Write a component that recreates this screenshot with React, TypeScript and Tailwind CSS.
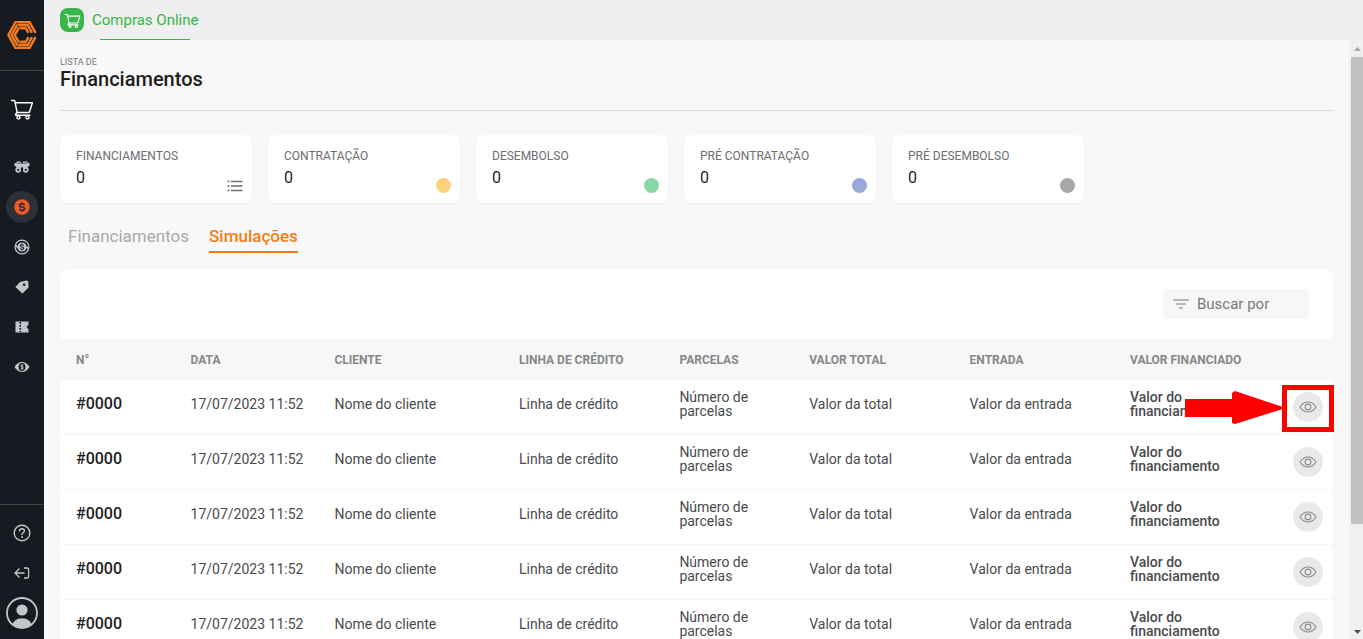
import type { ReactNode } from 'react';
import clsx from 'clsx';

const cards = [
  { label: 'FINANCIAMENTOS', value: 0, dot: null },
  { label: 'CONTRATAÇÃO', value: 0, dot: 'bg-[#fdd27c]' },
  { label: 'DESEMBOLSO', value: 0, dot: 'bg-[#88d8a6]' },
  { label: 'PRÉ CONTRATAÇÃO', value: 0, dot: 'bg-[#98a8d8]' },
  { label: 'PRÉ DESEMBOLSO', value: 0, dot: 'bg-[#a8a8a8]' },
];

const columns = [
  { title: 'N°', width: 'w-[9%]' },
  { title: 'DATA', width: 'w-[11.3%]' },
  { title: 'CLIENTE', width: 'w-[14.5%]' },
  { title: 'LINHA DE CRÉDITO', width: 'w-[12.6%]' },
  { title: 'PARCELAS', width: 'w-[10.2%]' },
  { title: 'VALOR TOTAL', width: 'w-[12.6%]' },
  { title: 'ENTRADA', width: 'w-[12.6%]' },
  { title: 'VALOR FINANCIADO', width: 'w-[12.8%]' },
];

const rows = [1, 2, 3, 4, 5].map((id) => ({
  id,
  number: '#0000',
  date: '17/07/2023 11:52',
  client: 'Nome do cliente',
  credit: 'Linha de crédito',
  installments: 'Número de parcelas',
  total: 'Valor da total',
  entry: 'Valor da entrada',
  financed: 'Valor do financiamento',
}));

function Logo() {
  return (
    <svg width="30" height="28" viewBox="0 0 30 28" fill="none" stroke="#f47a1f" strokeWidth="2.4">
      <path d="M28.6 11.8 L22.6 1.2 H8.4 L1.4 14 L8.4 26.8 H22.6 L28.6 16.2" />
      <path d="M25 11.8 L20.8 4.2 H10 L4.6 14 L10 23.8 H20.8 L25 16.2" />
      <path d="M21.4 11.8 L18.8 7.2 H11.6 L7.8 14 L11.6 20.8 H18.8 L21.4 16.2" />
      <path d="M9 1.5 L14 9.5 M9 26.5 L14 18.5" stroke="#171a21" strokeWidth="0.6" />
    </svg>
  );
}

function CartIcon({ size, stroke }: { size: number; stroke: number }) {
  return (
    <svg width={size} height={size} viewBox="0 0 24 24" fill="none" stroke="currentColor" strokeWidth={stroke} strokeLinejoin="round" strokeLinecap="round">
      <path d="M1.5 3.5 H4.6 L7.2 15.5 H19.3 L22.4 5.8 H5.1" />
      <path d="M7.2 15.5 L5.6 17.2 Q5.2 18.2 6.4 18.2 H19.8" />
      <circle cx="8.5" cy="20.4" r="1.5" />
      <circle cx="17.5" cy="20.4" r="1.5" />
    </svg>
  );
}

function TruckIcon() {
  return (
    <svg width="16" height="12" viewBox="0 0 16 12" fill="#c3c5c8">
      <path d="M2.5 0.5 H7 V2 H9 V0.5 H13.5 V2 H15.5 V5 H0.5 V2 H2.5 Z" />
      <path d="M1 4.8 H15 L12.6 7.6 H10 L8 6 L6 7.6 H3.4 Z" />
      <circle cx="4.2" cy="8.8" r="2" fill="none" stroke="#c3c5c8" strokeWidth="1.7" />
      <circle cx="11.8" cy="8.8" r="2" fill="none" stroke="#c3c5c8" strokeWidth="1.7" />
      <path d="M3 2.2 H13" stroke="#171a21" strokeWidth="0.6" />
    </svg>
  );
}

function CoinIcon() {
  return (
    <svg width="16" height="16" viewBox="0 0 16 16" fill="none">
      <circle cx="8" cy="8" r="7.7" fill="#f15a24" />
      <path d="M10.6 6 Q10 4.9 8 4.9 Q5.5 4.9 5.5 6.4 Q5.5 7.7 8 8 Q10.6 8.3 10.6 9.7 Q10.6 11.2 8 11.2 Q5.9 11.2 5.4 9.9 M8 3.3 V5 M8 11 V12.8" stroke="#2d3036" strokeWidth="1.7" />
    </svg>
  );
}

function RefundIcon() {
  return (
    <svg width="16" height="16" viewBox="0 0 16 16" fill="none" stroke="#c3c5c8">
      <circle cx="8" cy="8" r="6.9" strokeWidth="1.3" />
      <circle cx="8" cy="8" r="4.6" fill="#c3c5c8" stroke="none" />
      <path d="M1.2 6 L3.6 8.4 M14.8 10 L12.4 7.6" strokeWidth="1.6" />
      <path d="M9.7 6.6 Q9.3 5.8 8 5.8 Q6.4 5.8 6.4 6.9 Q6.4 7.8 8 8 Q9.7 8.2 9.7 9.2 Q9.7 10.3 8 10.3 Q6.6 10.3 6.3 9.4 M8 4.6 V6 M8 10.2 V11.6" stroke="#171a21" strokeWidth="1.1" />
    </svg>
  );
}

function TagIcon() {
  return (
    <svg width="14" height="14" viewBox="0 0 14 14">
      <path d="M5 2 L11.5 0.6 Q13.2 0.6 13.3 2 L13.6 7.6 L7.4 13.6 L0.4 7 Z" fill="#c3c5c8" />
      <circle cx="9.2" cy="4.8" r="1.3" fill="#171a21" />
    </svg>
  );
}

function TicketIcon() {
  return (
    <svg width="14" height="12" viewBox="0 0 14 12">
      <path d="M0.5 0.5 H13.5 V4 Q11.8 4.4 11.8 6 Q11.8 7.6 13.5 8 V11.5 H0.5 Z" fill="#c3c5c8" />
      <path d="M5.3 1 V11" stroke="#171a21" strokeWidth="1.6" strokeDasharray="1.8 1.2" />
    </svg>
  );
}

function EyeMoneyIcon() {
  return (
    <svg width="16" height="12" viewBox="0 0 16 12" fill="none">
      <path d="M0.5 6 Q3.5 1 8 1 Q12.5 1 15.5 6 Q12.5 11 8 11 Q3.5 11 0.5 6 Z" fill="#c3c5c8" />
      <ellipse cx="8" cy="6" rx="3.4" ry="3.9" fill="#171a21" />
      <path d="M9.4 4.8 Q9.1 4.2 8 4.2 Q6.7 4.2 6.7 5.1 Q6.7 5.8 8 6 Q9.4 6.2 9.4 7 Q9.4 7.9 8 7.9 Q6.9 7.9 6.6 7.2 M8 3.2 V8.9" stroke="#c3c5c8" strokeWidth="0.9" />
    </svg>
  );
}

function HelpIcon() {
  return (
    <svg width="18" height="18" viewBox="0 0 18 18" fill="none" stroke="#c3c5c8" strokeWidth="1.4" strokeLinecap="round">
      <circle cx="9" cy="9" r="7.8" />
      <path d="M6.6 7 Q6.7 4.8 9 4.8 Q11.4 4.8 11.4 6.8 Q11.4 8 10 8.8 Q9 9.4 9 10.5" />
      <path d="M9 13 V13.1" strokeWidth="1.8" />
    </svg>
  );
}

function ExitIcon() {
  return (
    <svg width="16" height="12" viewBox="0 0 16 12" fill="none" stroke="#c3c5c8" strokeWidth="1.3">
      <path d="M5.5 1.5 L1 6 L5.5 10.5 M1 6 H10.5" />
      <path d="M10 1 H13 Q14.6 1 14.6 2.6 V9.4 Q14.6 11 13 11 H10" />
    </svg>
  );
}

function AvatarIcon() {
  return (
    <svg width="32" height="32" viewBox="0 0 32 32">
      <clipPath id="avatar">
        <circle cx="16" cy="16" r="15" />
      </clipPath>
      <circle cx="16" cy="13" r="5.6" fill="#c3c5c8" />
      <path d="M5 32 Q6.5 21.2 16 21.2 Q25.5 21.2 27 32 Z" fill="#c3c5c8" clipPath="url(#avatar)" />
      <circle cx="16" cy="16" r="15" fill="none" stroke="#c3c5c8" strokeWidth="1.8" />
    </svg>
  );
}

function ListIcon() {
  return (
    <svg width="16" height="12" viewBox="0 0 16 12" className="block" fill="none" stroke="#6c6c72" strokeWidth="1.4">
      <path d="M0.5 1.5 H2.5 M4 1.5 H15.5 M0.5 6 H2.5 M4 6 H15.5 M0.5 10.5 H2.5 M4 10.5 H15.5" />
    </svg>
  );
}

function EyeIcon() {
  return (
    <svg width="18" height="12" viewBox="0 0 18 12" fill="none" stroke="#8c8c8c" strokeWidth="1.1">
      <path d="M1 6 Q4.2 1 9 1 Q13.8 1 17 6 Q13.8 11 9 11 Q4.2 11 1 6 Z" />
      <circle cx="9" cy="6" r="2.9" />
    </svg>
  );
}

function NavItem({ label, active, children }: { label: string; active?: boolean; children: ReactNode }) {
  return (
    <a href="#" aria-label={label} className="flex h-10 items-center justify-center">
      <span className={clsx('flex size-8 items-center justify-center rounded-full', active && 'bg-[#2d3036]')}>
        {children}
      </span>
    </a>
  );
}

function Sidebar() {
  return (
    <aside className="flex w-11 shrink-0 flex-col bg-[#171a21]">
      <a href="#" aria-label="Início" className="flex h-[71px] items-center justify-center border-b border-[#404248]">
        <Logo />
      </a>
      <a href="#" aria-label="Compras" className="flex h-[76px] items-center justify-center text-white">
        <CartIcon size={24} stroke={1.4} />
      </a>
      <nav>
        <NavItem label="Entregas"><TruckIcon /></NavItem>
        <NavItem label="Financiamentos" active><CoinIcon /></NavItem>
        <NavItem label="Reembolsos"><RefundIcon /></NavItem>
        <NavItem label="Ofertas"><TagIcon /></NavItem>
        <NavItem label="Cupons"><TicketIcon /></NavItem>
        <NavItem label="Cotações"><EyeMoneyIcon /></NavItem>
      </nav>
      <div className="mt-auto border-t border-[#404248] pt-2 pb-1.5">
        <NavItem label="Ajuda"><HelpIcon /></NavItem>
        <NavItem label="Sair"><ExitIcon /></NavItem>
        <NavItem label="Perfil"><AvatarIcon /></NavItem>
      </div>
    </aside>
  );
}

function Highlight() {
  return (
    <>
      <span className="absolute -top-[7px] -left-[11px] h-[47px] w-[52px] border-5 border-[#ff0000]" />
      <svg className="absolute -top-px -left-[108px]" width="98" height="34" viewBox="0 0 98 34" fill="#ff0000">
        <path d="M0 8 H47 V2 L50 0 L98 16 V18 L50 33 L47 32 V26 H0 Z" />
      </svg>
    </>
  );
}

function SimulationsTable() {
  return (
    <table className="w-full table-fixed border-separate border-spacing-0 text-left text-sm leading-[14px] text-[#4a4a4e]">
      <thead>
        <tr className="h-[41px] bg-[#f7f7f7] text-xs text-[#85878b]">
          {columns.map(({ title, width }) => (
            <th key={title} className={clsx('px-4 font-bold whitespace-nowrap', width)}>{title}</th>
          ))}
          <td />
        </tr>
      </thead>
      <tbody>
        {rows.map((row, index) => (
          <tr key={row.id} className="h-[55px] *:border-b *:border-[#f5f5f5]">
            <td className="px-4 pb-1.5 text-base leading-[14px] font-medium text-[#1c1d22]">{row.number}</td>
            <td className="px-4 pb-1.5 whitespace-nowrap">{row.date}</td>
            <td className="px-4 pb-1.5">{row.client}</td>
            <td className="px-4 pb-1.5">{row.credit}</td>
            <td className="px-4 pb-1.5">{row.installments}</td>
            <td className="px-4 pb-1.5">{row.total}</td>
            <td className="px-4 pb-1.5">{row.entry}</td>
            <td className="px-4 pb-1.5 font-medium">{row.financed}</td>
            <td>
              <div className="relative mr-2.5 ml-auto size-[30px]">
                <button type="button" aria-label="Visualizar" className="flex size-[30px] items-center justify-center rounded-full bg-[#e9e9e9]">
                  <EyeIcon />
                </button>
                {index === 0 && <Highlight />}
              </div>
            </td>
          </tr>
        ))}
      </tbody>
    </table>
  );
}

function ScrollRail() {
  return (
    <div className="flex w-3.5 shrink-0 flex-col items-end bg-[#f0f0f0]">
      <svg width="12" height="17" viewBox="0 0 12 17" className="shrink-0" fill="#a3a3a3">
        <path d="M3 11 L6.5 7 L10 11 Z" />
      </svg>
      <div className="h-[78%] w-3 bg-[#c1c1c1]" />
      <svg width="12" height="17" viewBox="0 0 12 17" className="mt-auto shrink-0" fill="#505050">
        <path d="M3 8 H10 L6.5 12 Z" />
      </svg>
    </div>
  );
}

function App() {
  return (
    <div className="flex h-screen overflow-hidden bg-[#f8f8f8] font-[Roboto,sans-serif] text-[#1c1d22]">
      <Sidebar />
      <div className="flex min-w-0 flex-1 flex-col">
        <header className="flex h-10 shrink-0 items-center bg-[#efefef] px-4">
          <a href="#" className="flex items-center gap-2 text-[15px] text-[#39b54a]">
            <span className="flex size-6 items-center justify-center rounded-lg bg-[#39b54a] text-white">
              <CartIcon size={17} stroke={1.5} />
            </span>
            <span className="relative h-10 leading-10 after:absolute after:inset-x-2 after:bottom-0 after:h-px after:bg-[#39b54a]">
              Compras Online
            </span>
          </a>
        </header>
        <div className="flex min-h-0 flex-1">
          <main className="min-w-0 flex-1 overflow-hidden px-4 pt-4">
            <div className="border-b border-[#d9d9d9] pb-5">
              <p className="text-[9px] leading-3 text-[#77797d]">LISTA DE</p>
              <h1 className="text-xl leading-[22px] font-medium">Financiamentos</h1>
            </div>

            <div className="mt-6 flex gap-4">
              {cards.map(({ label, value, dot }) => (
                <div key={label} className="flex h-[68px] w-48 justify-between rounded-lg bg-white pt-3 pr-2 pb-2.5 pl-4 shadow-xs">
                  <div>
                    <p className="text-xs leading-[18px] text-[#6c6d72]">{label}</p>
                    <p className="leading-[26px]">{value}</p>
                  </div>
                  <span className={clsx('mr-px flex h-[15px] items-center self-end', dot && 'w-[15px] rounded-full', dot)}>
                    {!dot && <ListIcon />}
                  </span>
                </div>
              ))}
            </div>

            <div role="tablist" className="mt-4 flex gap-5 pl-2 text-[17px]">
              <button type="button" role="tab" aria-selected="false" className="h-[34px] border-b-2 border-transparent pt-1 text-[#a9a9a9]">
                Financiamentos
              </button>
              <button type="button" role="tab" aria-selected="true" className="h-[34px] border-b-2 border-[#f57c14] pt-1 font-medium text-[#f57c14]">
                Simulações
              </button>
            </div>

            <section className="mt-4 rounded-lg bg-white shadow-xs">
              <div className="flex h-[70px] items-center justify-end pr-6">
                <label className="flex h-[30px] w-[146px] items-center gap-2 rounded bg-[#f7f7f7] pl-2.5">
                  <svg width="16" height="12" viewBox="0 0 16 12" className="shrink-0" fill="none" stroke="#a5a5a5" strokeWidth="1.3">
                    <path d="M0 2 H16 M3 6 H13 M6 10 H10" />
                  </svg>
                  <input
                    type="text"
                    aria-label="Buscar por"
                    placeholder="Buscar por"
                    className="w-full min-w-0 text-[15px] outline-none placeholder:text-[#77787b]"
                  />
                </label>
              </div>
              <SimulationsTable />
            </section>
          </main>
          <ScrollRail />
        </div>
      </div>
    </div>
  );
}

export default App;
